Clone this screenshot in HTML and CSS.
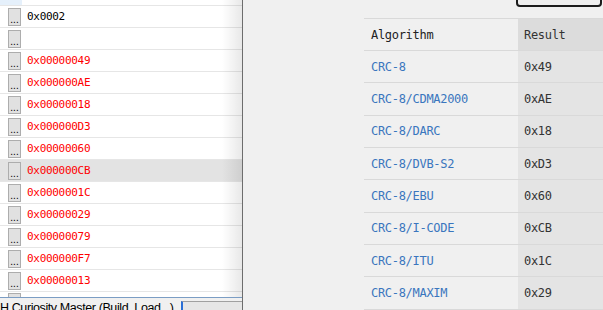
FILE: index.html
```html
<!DOCTYPE html>
<html>
<head>
    <title>CRC Calculator</title>
    <link rel="stylesheet" href="styles.css">
</head>
<body>
    <div class="left">
        <div class="grid">
            <div class="row top"><span class="sel"></span></div>
            <div class="row"><span class="dots">...</span><span class="val plain">0x0002</span></div>
            <div class="row"><span class="dots">...</span><span class="val"></span></div>
            <div class="row"><span class="dots">...</span><span class="val">0x00000049</span></div>
            <div class="row"><span class="dots">...</span><span class="val">0x000000AE</span></div>
            <div class="row"><span class="dots">...</span><span class="val">0x00000018</span></div>
            <div class="row"><span class="dots">...</span><span class="val">0x000000D3</span></div>
            <div class="row"><span class="dots">...</span><span class="val">0x00000060</span></div>
            <div class="row hover"><span class="dots">...</span><span class="val">0x000000CB</span></div>
            <div class="row"><span class="dots">...</span><span class="val">0x0000001C</span></div>
            <div class="row"><span class="dots">...</span><span class="val">0x00000029</span></div>
            <div class="row"><span class="dots">...</span><span class="val">0x00000079</span></div>
            <div class="row"><span class="dots">...</span><span class="val">0x000000F7</span></div>
            <div class="row"><span class="dots">...</span><span class="val">0x00000013</span></div>
            <div class="row last"><span class="dots"></span></div>
        </div>
        <div class="status">
            <span class="status-text">H Curiosity Master (Build, Load...)</span>
            <span class="progress"></span>
        </div>
    </div>

    <div class="right">
        <div class="btn-row"><button class="close"></button></div>
        <div class="table">
            <div class="trow head"><span class="name">Algorithm</span><span class="res">Result</span></div>
            <div class="trow"><span class="name link">CRC-8</span><span class="res">0x49</span></div>
            <div class="trow"><span class="name link">CRC-8/CDMA2000</span><span class="res">0xAE</span></div>
            <div class="trow"><span class="name link">CRC-8/DARC</span><span class="res">0x18</span></div>
            <div class="trow"><span class="name link">CRC-8/DVB-S2</span><span class="res">0xD3</span></div>
            <div class="trow"><span class="name link">CRC-8/EBU</span><span class="res">0x60</span></div>
            <div class="trow"><span class="name link">CRC-8/I-CODE</span><span class="res">0xCB</span></div>
            <div class="trow"><span class="name link">CRC-8/ITU</span><span class="res">0x1C</span></div>
            <div class="trow"><span class="name link">CRC-8/MAXIM</span><span class="res">0x29</span></div>
        </div>
    </div>
</body>
</html>
```

FILE: styles.css
```css
body {
    margin: 0;
    width: 603px;
    height: 310px;
    overflow: hidden;
    display: flex;
    background-color: #f0f0f0;
}
.left {
    width: 242px;
    height: 310px;
    display: flex;
    flex-direction: column;
    background-color: #fff;
    border-right: 1px solid #6d6d6d;
    position: relative;
}
.left::after {
    content: "";
    position: absolute;
    top: 0;
    right: 0;
    width: 20px;
    height: 297px;
    background: linear-gradient(to right, rgba(0,0,0,0), rgba(0,0,0,0.09));
}
.grid {
    height: 297px;
    overflow: hidden;
}
.row {
    height: 21px;
    border-bottom: 1px solid #e6e6e6;
    display: flex;
    align-items: center;
}
.row.top {
    height: 5px;
}
.row.last {
    align-items: flex-start;
}
.row.last .dots {
    margin-top: 1px;
}
.sel {
    width: 22px;
    height: 5px;
    background-color: #e5f0fb;
}
.row.hover {
    background-color: #e3e3e3;
}
.dots {
    width: 11px;
    height: 16px;
    margin-left: 8px;
    border: 1px solid #adadad;
    background-color: #e1e1e1;
    font-family: "Liberation Sans", sans-serif;
    font-size: 10px;
    line-height: 22px;
    text-align: center;
    overflow: hidden;
    color: #000;
}
.val {
    margin-left: 6px;
    font-family: "DejaVu Sans Mono", monospace;
    font-size: 11px;
    letter-spacing: -0.3px;
    color: #ff0000;
}
.val.plain {
    color: #000;
}
.status {
    height: 12px;
    border-top: 1px solid #7b9dc4;
    background-color: #f0f0f0;
    display: flex;
    overflow: hidden;
}
.status-text {
    width: 181px;
    font-family: "Liberation Sans", sans-serif;
    font-size: 12.5px;
    letter-spacing: -0.4px;
    line-height: 14px;
    padding-top: 3px;
    white-space: nowrap;
    color: #000;
}
.progress {
    width: 59px;
    margin-top: 3px;
    border-left: 2px solid #2a6fd6;
    border-top: 1px solid #a0a0a0;
    background-color: #e6e6e6;
}
.right {
    flex: 1;
    display: flex;
    flex-direction: column;
}
.btn-row {
    display: flex;
    justify-content: flex-end;
    height: 18px;
}
.close {
    width: 86px;
    height: 20px;
    margin-top: -13px;
    margin-right: 1px;
    border: 2px solid #1c1c1c;
    border-radius: 4px;
    background-color: #efefef;
}
.table {
    margin-left: 121px;
    font-family: "DejaVu Sans Mono", monospace;
    font-size: 12px;
    letter-spacing: -0.3px;
}
.trow {
    display: grid;
    grid-template-columns: 154px 1fr;
    height: 31.33px;
    border-bottom: 1px solid #d9d9d9;
}
.trow.head {
    border-top: 1px solid #d9d9d9;
    height: 31px;
}
.trow span {
    display: flex;
    align-items: center;
}
.name {
    padding-left: 7px;
    color: #222;
}
.name.link {
    color: #3a76be;
}
.res {
    padding-left: 6px;
    background-color: #e4e4e4;
    color: #333;
}
.head .res {
    background-color: #dcdcdc;
}
```
